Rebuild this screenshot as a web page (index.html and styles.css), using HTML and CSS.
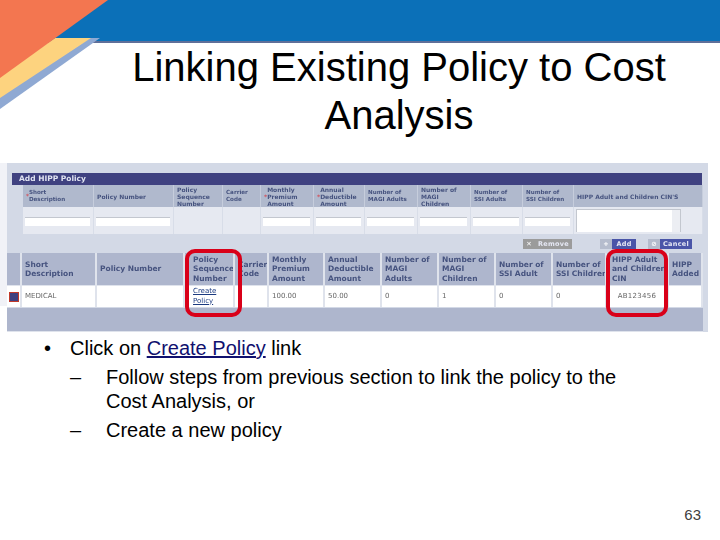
FILE: index.html
```html
<!DOCTYPE html>
<html lang="en">
<head>
<meta charset="utf-8">
<title>Linking Existing Policy to Cost Analysis</title>
<link rel="stylesheet" href="styles.css">
</head>
<body>
<main class="slide">
  <svg class="decor" width="720" height="120" viewBox="0 0 720 120" aria-hidden="true">
    <rect x="0" y="0" width="720" height="41" fill="#0b70b8"/>
    <rect x="0" y="41" width="720" height="2" fill="#5f6f99"/>
    <polygon points="100,38 90,38 0,97 0,109" fill="#8fa9d3"/>
    <polygon points="91,38 55,38 0,76 0,98" fill="#fdd37f"/>
    <polygon points="0,0 108,0 0,78" fill="#f37650"/>
  </svg>
  <h1 class="title">Linking Existing Policy to Cost Analysis</h1>

  <section class="shot">
    <div class="form-panel soft">
      <div class="form-bar">Add HIPP Policy</div>
      <div class="form-grid">
        <div class="fh small"><span class="req">*</span> Short<br>Description</div>
        <div class="fh">Policy Number</div>
        <div class="fh">Policy<br>Sequence<br>Number</div>
        <div class="fh small">Carrier<br>Code</div>
        <div class="fh"><span class="req">*</span> Monthly<br>Premium<br>Amount</div>
        <div class="fh"><span class="req">*</span> Annual<br>Deductible<br>Amount</div>
        <div class="fh small">Number of<br>MAGI Adults</div>
        <div class="fh">Number of<br>MAGI<br>Children</div>
        <div class="fh small">Number of<br>SSI Adults</div>
        <div class="fh small">Number of<br>SSI Children</div>
        <div class="fh">HIPP Adult and Children CIN'S</div>
        <div class="fc"><span class="inp"></span></div>
        <div class="fc"><span class="inp"></span></div>
        <div class="fc"></div>
        <div class="fc"></div>
        <div class="fc"><span class="inp"></span></div>
        <div class="fc"><span class="inp"></span></div>
        <div class="fc"><span class="inp"></span></div>
        <div class="fc"><span class="inp"></span></div>
        <div class="fc"><span class="inp"></span></div>
        <div class="fc"><span class="inp"></span></div>
        <div class="fc"><span class="area"><span class="scroll"></span></span></div>
      </div>
      <div class="actions">
        <span class="btn btn-grey"><span class="ico">✕</span><span class="lbl">Remove</span></span>
        <span class="btn btn-add"><span class="ico">+</span><span class="lbl">Add</span></span>
        <span class="btn btn-cancel"><span class="ico">⊘</span><span class="lbl">Cancel</span></span>
      </div>
    </div>

    <div class="list-grid soft">
      <div class="lh"></div>
      <div class="lh">Short<br>Description</div>
      <div class="lh">Policy Number</div>
      <div class="lh seq">Policy<br>Sequence<br>Number</div>
      <div class="lh">Carrier<br>Code</div>
      <div class="lh">Monthly<br>Premium<br>Amount</div>
      <div class="lh">Annual<br>Deductible<br>Amount</div>
      <div class="lh">Number of<br>MAGI<br>Adults</div>
      <div class="lh">Number of<br>MAGI<br>Children</div>
      <div class="lh">Number of<br>SSI Adult</div>
      <div class="lh">Number of<br>SSI Children</div>
      <div class="lh cin">HIPP Adult<br>and Children<br>CIN</div>
      <div class="lh">HIPP<br>Added</div>
      <div class="lc icon-cell"><span class="del"></span></div>
      <div class="lc">MEDICAL</div>
      <div class="lc"></div>
      <div class="lc seq"><a class="mini-link" href="#">Create<br>Policy</a></div>
      <div class="lc"></div>
      <div class="lc">100.00</div>
      <div class="lc">50.00</div>
      <div class="lc">0</div>
      <div class="lc">1</div>
      <div class="lc">0</div>
      <div class="lc">0</div>
      <div class="lc center">AB123456</div>
      <div class="lc"></div>
    </div>
    <div class="list-foot"></div>
    <span class="mark mark-seq"></span>
    <span class="mark mark-cin"></span>
  </section>

  <ul class="points">
    <li>Click on <a href="#">Create Policy</a> link
      <ul>
        <li>Follow steps from previous section to link the policy to the Cost Analysis, or</li>
        <li>Create a new policy</li>
      </ul>
    </li>
  </ul>
  <div class="page-no">63</div>
</main>
</body>
</html>
```
FILE: styles.css
```css
html, body { margin: 0; padding: 0; background: #fff; }
.slide {
  position: relative;
  width: 720px;
  height: 540px;
  padding-top: 43px;
  box-sizing: border-box;
  overflow: hidden;
  font-family: "Liberation Sans", Arial, sans-serif;
  color: #000;
}
.decor { position: absolute; left: 0; top: 0; }
.title {
  position: relative;
  margin: 0 0 24px 78px;
  padding: 0 50px;
  font-size: 40px;
  line-height: 48px;
  font-weight: 400;
  text-align: center;
}
.shot {
  position: relative;
  width: 701px;
  height: 169px;
  margin-left: 7px;
  background: #d3d9e6;
  font-family: "DejaVu Sans", sans-serif;
  color: #46537f;
}
.shot::before {
  content: "";
  position: absolute;
  left: -7px;
  top: 0;
  width: 7px;
  height: 143px;
  background: #f1f2f7;
}
.soft { filter: blur(0.45px); }
.form-panel { height: 90px; padding: 10px 6px 0 5px; box-sizing: border-box; }
.form-bar {
  height: 12px;
  padding-left: 7px;
  background: #3f4180;
  color: #dfe2f0;
  font-size: 7.5px;
  font-weight: 700;
  line-height: 12px;
}
.form-grid {
  display: grid;
  grid-template-columns: 71px 80px 49px 38px 53px 51px 53px 53px 52px 51px 129px;
  grid-template-rows: 22px 27px;
  margin-left: 11px;
}
.fh {
  display: flex;
  align-items: center;
  padding-left: 3px;
  background: #b0b9cd;
  border-right: 1px solid #c6cddc;
  font-size: 6px;
  font-weight: 700;
  line-height: 7px;
  white-space: nowrap;
}
.fh.small { font-size: 5.6px; }
.fc {
  display: flex;
  align-items: center;
  background: #e6e9f1;
  border-right: 1px solid #d8dde8;
}
.req { color: #d2505a; }
.inp {
  display: block;
  width: calc(100% - 5px);
  height: 8px;
  margin: 1px 0 0 2px;
  background: #fff;
  border-top: 1px solid #c3c7cf;
}
.area {
  display: flex;
  justify-content: flex-end;
  width: 103px;
  height: 22px;
  margin: 0 0 0 2px;
  background: #fff;
  border: 1px solid #c3c7cf;
  border-bottom: 0;
}
.scroll { width: 8px; background: #eceef3; }
.actions {
  display: flex;
  justify-content: flex-end;
  gap: 12px;
  height: 10px;
  margin-top: 5px;
  padding-right: 10px;
}
.btn { display: flex; align-items: stretch; font-size: 6.5px; font-weight: 700; line-height: 10px; letter-spacing: .3px; color: #e6e8f4; }
.ico { flex: none; width: 12px; text-align: center; color: #fff; background: #b5bccd; }
.lbl { flex: 1; text-align: center; background: #4a55a8; }
.btn-grey { width: 49px; margin-right: 16px; }
.btn-add { width: 36px; }
.btn-cancel { width: 44px; }
.btn-grey .lbl { background: #9b9b9b; }
.btn-grey .ico { background: #9b9b9b; }
.list-grid {
  display: grid;
  grid-template-columns: 15px 75px 88px 50px 34px 56px 57px 57px 57px 57px 54px 62px 34px;
  grid-template-rows: 33px 21px;
  width: 696px;
  background: #e4e8f0;
}
.lh {
  display: flex;
  align-items: center;
  padding-left: 3px;
  background: #aeb6cd;
  border-right: 2px solid #dfe3ec;
  border-bottom: 1px solid #dfe3ec;
  font-size: 7.5px;
  font-weight: 700;
  line-height: 9.5px;
  white-space: nowrap;
  overflow: hidden;
}
.lc {
  display: flex;
  align-items: center;
  padding-left: 3px;
  background: #fff;
  border-right: 2px solid #dfe3ec;
  font-size: 7px;
  line-height: 9.5px;
  color: #666;
}
.lh.seq, .lc.seq { padding-left: 8px; }
.lh.cin { padding-left: 5px; }
.icon-cell { padding-left: 2px; }
.center { justify-content: center; padding: 0; letter-spacing: .3px; }
.del {
  display: block;
  flex: none;
  width: 8px;
  height: 8px;
  background: #3f4180;
  border: 1px solid #c0392b;
}
.mini-link { color: #1b3a80; font-weight: 400; }
.list-foot {
  height: 24px;
  margin-top: 1px;
  width: 696px;
  background: #aeb6cd;
  border-bottom: 1px solid #dfe3ec;
  box-sizing: border-box;
}
.mark {
  position: absolute;
  top: 86px;
  height: 68px;
  box-sizing: border-box;
  border: 4px solid #d90019;
  border-radius: 10px;
}
.mark-seq { left: 178px; width: 57px; }
.mark-cin { left: 599px; width: 62px; }
.points {
  margin: 4px 0 0;
  padding: 0 60px 0 70px;
  list-style: none;
  font-size: 20px;
  line-height: 24px;
}
.points > li { position: relative; }
.points > li::before { content: "•"; position: absolute; left: -26px; }
.points a { color: #10106e; text-decoration: underline; }
.points ul { margin: 5px 0 0; padding: 0 0 0 36px; list-style: none; }
.points ul li { position: relative; margin-bottom: 5px; }
.points ul li::before { content: "–"; position: absolute; left: -36px; }
.page-no {
  position: absolute;
  right: 19px;
  top: 506px;
  font-size: 15px;
  line-height: 18px;
  color: #404040;
}
```
